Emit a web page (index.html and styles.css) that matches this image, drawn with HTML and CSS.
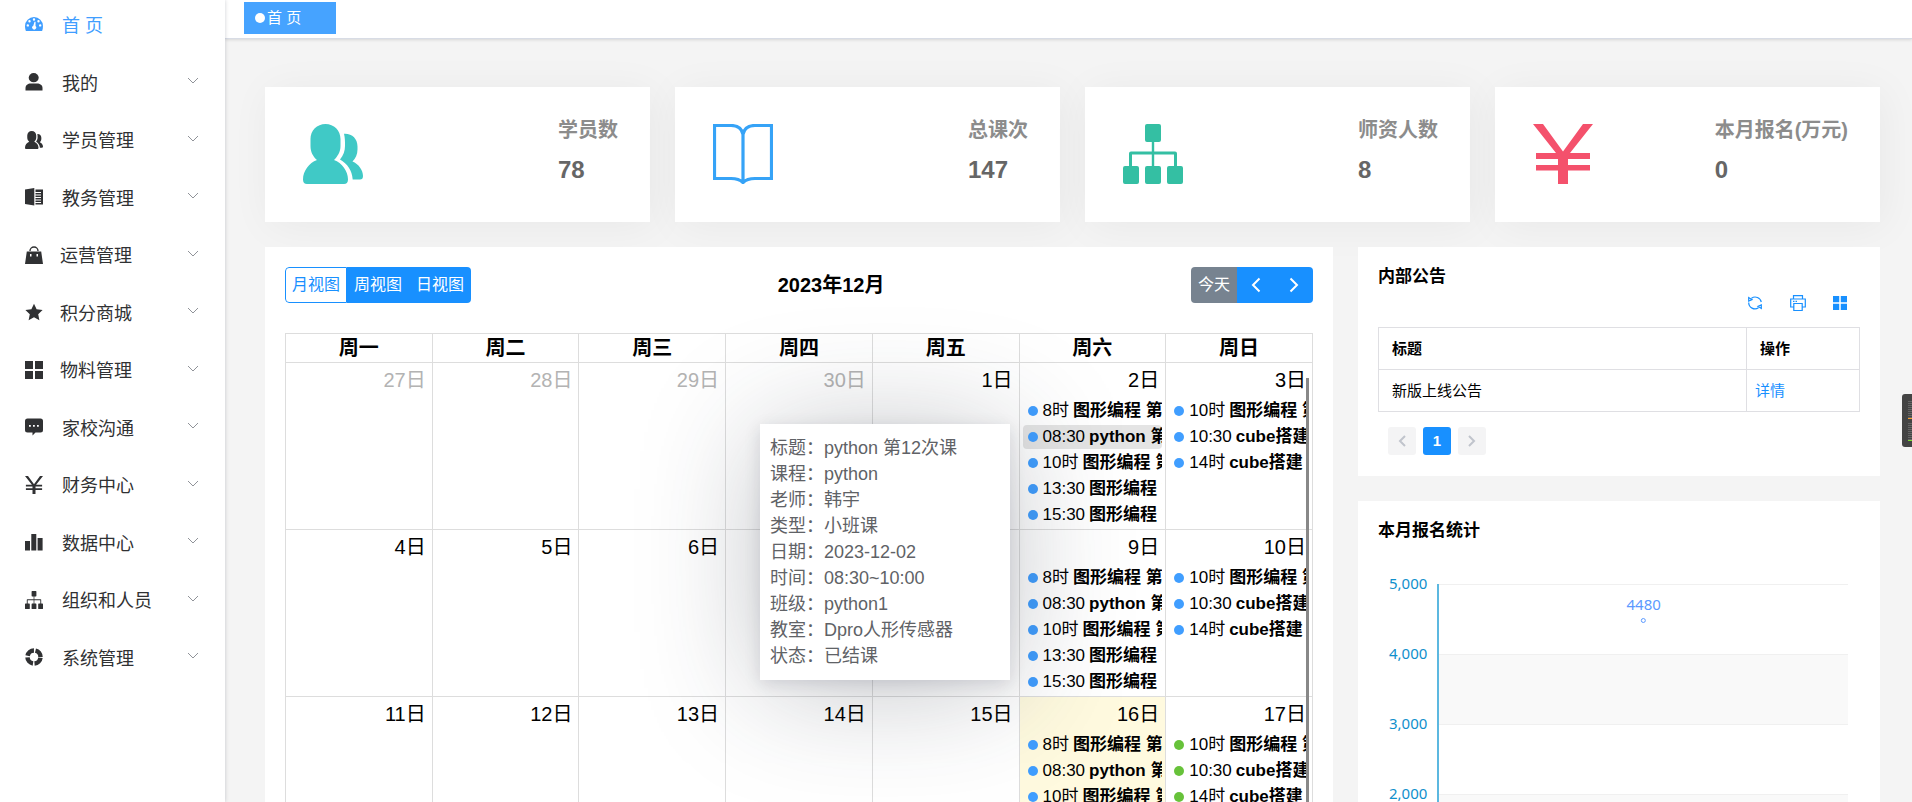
FILE: index.html
```html
<!DOCTYPE html>
<html lang="zh-CN">
<head>
<meta charset="utf-8">
<title>首页</title>
<link rel="stylesheet" href="styles.css">
</head>
<body>
<svg class="defs" aria-hidden="true">
  <symbol id="i-arrow" viewBox="0 0 12 8"><path d="M1 1l5 5 5-5" fill="none" stroke="currentColor" stroke-width="1"/></symbol>
  <symbol id="i-peoples" viewBox="0 0 60 60"><path d="M22.500 0C31 0 37.500 6.500 37.500 15v7c0 6-3 10.500-6.500 14C39 39 45 47 45 55.500c0 3-1.500 4.500-4 4.500H4c-2.500 0-4-1.500-4-4.500C0 47 6 39 14 36c-4-3.500-6.500-8-6.500-14v-7C7.500 6.500 14 0 22.500 0z"/><path d="M41 9.700c8-.5 13.500 4.800 13.500 12.800v3c0 5-2 9-5 12C55.500 40 60 46 60 52c0 2.500-1 3.500-3 3.500h-7.300C49 46 44.500 40 37 35.500c3.500-4.500 5-8.500 5-13.500 0-5 0-8-1-12.300z"/></symbol>
  <symbol id="i-tree" viewBox="0 0 60 60"><path d="M24 0h12a2 2 0 0 1 2 2v14a2 2 0 0 1-2 2h-4.800v9.500H52a2 2 0 0 1 2 2V42h4a2 2 0 0 1 2 2v14a2 2 0 0 1-2 2H46a2 2 0 0 1-2-2V44a2 2 0 0 1 2-2h5V30.500H31.200V42H36a2 2 0 0 1 2 2v14a2 2 0 0 1-2 2H24a2 2 0 0 1-2-2V44a2 2 0 0 1 2-2h4.800V30.500H9V42h5a2 2 0 0 1 2 2v14a2 2 0 0 1-2 2H2a2 2 0 0 1-2-2V44a2 2 0 0 1 2-2h4V29.500a2 2 0 0 1 2-2h20.800V18H24a2 2 0 0 1-2-2V2a2 2 0 0 1 2-2z"/></symbol>
  <symbol id="i-yen" viewBox="0 0 60 60"><path d="M0 0h10l20 27.500L50 0h10L37 29h20v6H35v6h22v5.500H35V60H25V46.500H3V41h22v-6H3v-6h20z"/></symbol>
  <symbol id="i-grid" viewBox="0 0 18 18"><path d="M0 0h8v8H0zM10 0h8v8h-8zM0 10h8v8H0zM10 10h8v8h-8z"/></symbol>
</svg>
<div class="app">
  <nav class="side" aria-label="主菜单">
    <ul class="menu" id="menu"></ul>
  </nav>
  <div class="main">
    <header class="tabs"><a class="tab" href="#home"><i class="tab-dot"></i>首 页</a></header>
    <main class="content">
      <section class="stats">
        <div class="stat"><svg class="stat-icon teal"><use href="#i-peoples"/></svg><div class="stat-text"><h3>学员数</h3><strong>78</strong></div></div>
        <div class="stat"><svg class="stat-icon blue" viewBox="0 0 60 60"><path d="M1.500 1.500H18c7 0 11 3.500 12 9 1-5.500 5-9 12-9h16.500v53H42c-6 0-9 1-12 4-3-3-6-4-12-4H1.500zM30 10v48" fill="none" stroke="currentColor" stroke-width="3.200"/></svg><div class="stat-text"><h3>总课次</h3><strong>147</strong></div></div>
        <div class="stat"><svg class="stat-icon green"><use href="#i-tree"/></svg><div class="stat-text"><h3>师资人数</h3><strong>8</strong></div></div>
        <div class="stat"><svg class="stat-icon red"><use href="#i-yen"/></svg><div class="stat-text"><h3>本月报名(万元)</h3><strong>0</strong></div></div>
      </section>
      <div class="columns">
        <section class="panel calendar">
          <div class="cal-bar">
            <div class="btns"><button class="btn on">月视图</button><button class="btn">周视图</button><button class="btn">日视图</button></div>
            <h2>2023年12月</h2>
            <div class="btns"><button class="btn today">今天</button><button class="btn arrow" aria-label="上月"><svg viewBox="0 0 10 16"><path d="M8.500 1.500L2 8l6.500 6.500"/></svg></button><button class="btn arrow" aria-label="下月"><svg viewBox="0 0 10 16"><path d="M1.500 1.500L8 8l-6.500 6.500"/></svg></button></div>
          </div>
          <div class="cal-body">
            <table class="cal">
              <thead><tr><th>周一</th><th>周二</th><th>周三</th><th>周四</th><th>周五</th><th>周六</th><th>周日</th></tr></thead>
              <tbody id="days"></tbody>
            </table>
            <div class="scroll-thumb"></div>
            <dl class="pop">
              <dt>标题：</dt><dd>python 第12次课</dd>
              <dt>课程：</dt><dd>python</dd>
              <dt>老师：</dt><dd>韩宇</dd>
              <dt>类型：</dt><dd>小班课</dd>
              <dt>日期：</dt><dd>2023-12-02</dd>
              <dt>时间：</dt><dd>08:30~10:00</dd>
              <dt>班级：</dt><dd>python1</dd>
              <dt>教室：</dt><dd>Dpro人形传感器</dd>
              <dt>状态：</dt><dd>已结课</dd>
            </dl>
          </div>
        </section>
        <div class="right">
          <section class="panel notice">
            <h4>内部公告</h4>
            <div class="tools">
              <button class="tool" aria-label="刷新"><svg viewBox="0 0 16 16"><path d="M4.500 3.200A6.300 6.300 0 0 1 14.300 7M1.700 7.500a6.300 6.300 0 0 0 9.800 5.300M1.700 6V2.500L5 4.700zM14.300 10v3.500L11 11.300z" fill="none" stroke="currentColor" stroke-width="1.200"/></svg></button>
              <button class="tool" aria-label="打印"><svg viewBox="0 0 16 16"><path d="M3.500 4V.6h9V4M3.500 12H.7V4h14.600v8h-2.800M3.800 8.500h8.400v7H3.800zM3 6.300h1.500M5.500 6.300H7" fill="none" stroke="currentColor" stroke-width="1.200"/></svg></button>
              <button class="tool" aria-label="列设置"><svg class="small" viewBox="0 0 18 18"><use href="#i-grid"/></svg></button>
            </div>
            <table class="list">
              <thead><tr><th>标题</th><th class="op">操作</th></tr></thead>
              <tbody><tr><td>新版上线公告</td><td class="op"><a href="#detail">详情</a></td></tr></tbody>
            </table>
            <div class="pager"><button aria-label="上一页"><svg viewBox="0 0 8 12"><path d="M7 1L2 6l5 5"/></svg></button><button class="cur">1</button><button aria-label="下一页"><svg viewBox="0 0 8 12"><path d="M1 1l5 5-5 5"/></svg></button></div>
          </section>
          <section class="panel signup">
            <h4>本月报名统计</h4>
            <div class="chart">
              <div class="axis"><span>5,000</span><span>4,000</span><span>3,000</span><span>2,000</span></div>
              <div class="plot"><i></i><i></i><i></i><i></i><div class="point">4480</div></div>
            </div>
          </section>
        </div>
      </div>
    </main>
  </div>
</div>
<aside class="meter" aria-hidden="true"><i class="orange"></i><i class="lime"></i></aside>
<script src="app.js"></script>
</body>
</html>
```
FILE: app.js
```js
const svg = (body) => `<svg class="menu-icon" viewBox="0 0 18 18">${body}</svg>`;
const use = (id) => `<svg class="menu-icon"><use href="#${id}"/></svg>`;
const menu = [
  ['首 页', svg('<path fill-rule="evenodd" d="M9 1a9 9 0 0 1 9 9c0 1.900-.3 3.500-.9 5H.9A12 12 0 0 1 0 10a9 9 0 0 1 9-9zM9 2.300a1.200 1.200 0 1 0 0 2.400 1.200 1.200 0 0 0 0-2.400zM4.500 4a1.200 1.200 0 1 0 0 2.400 1.200 1.200 0 0 0 0-2.400zM13.500 4a1.200 1.200 0 1 0 0 2.400 1.200 1.200 0 0 0 0-2.400zM2.800 8.200a1.200 1.200 0 1 0 0 2.400 1.200 1.200 0 0 0 0-2.400zM15.200 8.200a1.200 1.200 0 1 0 0 2.400 1.200 1.200 0 0 0 0-2.400zM9.500 5.800L8.300 9.700a2 2 0 1 0 2.200.3l.1-4.200z"/>'), 'active'],
  ['我的', svg('<ellipse cx="8.700" cy="4.700" rx="5" ry="4.600"/><path d="M.5 17.500V15c0-3 2.500-4.500 5-4.500h6.500c3 0 5.500 1.500 5.500 4.500v2.500z"/>')],
  ['学员管理', use('i-peoples')],
  ['教务管理', svg('<path d="M0 1.500L9.300 0v17.500L0 16zM10.500 1.500H18v15h-7.500v-1.500H16v-1h-5.500v-1.500H16v-1h-5.500V10H16V9h-5.500V7.500H16v-1h-5.500V5H16V4h-5.500z"/>')],
  ['运营管理', svg('<path d="M5 5a4 4 0 0 1 8 0" fill="none" stroke="currentColor" stroke-width="1.400"/><path fill-rule="evenodd" d="M1.800 5.500h14.400L18 18H0zM5 8v2.500h1.500V8zM11.500 8v2.500H13V8z"/>'), 'near'],
  ['积分商城', svg('<path d="M9 .8l2.600 5.500 6 .7-4.400 4.200 1.200 6L9 14.200l-5.400 3 1.200-6L.4 7l6-.7z"/>'), 'near'],
  ['物料管理', use('i-grid'), 'near'],
  ['家校沟通', svg('<path fill-rule="evenodd" d="M2.500.5h13A2.500 2.500 0 0 1 18 3v9a2.500 2.500 0 0 1-2.500 2.500h-5L7.500 17.500v-3h-5A2.500 2.500 0 0 1 0 12V3A2.500 2.500 0 0 1 2.500.5zM4 7v1.800h1.800V7zM8 7v1.800h1.800V7zM12 7v1.800h1.800V7z"/>')],
  ['财务中心', use('i-yen')],
  ['数据中心', svg('<path d="M0 8h5v9.500H0zM6.300 1h5v16.500h-5zM12.600 5h5v12.500h-5z"/>')],
  ['组织和人员', use('i-tree')],
  ['系统管理', svg('<circle cx="9" cy="9" r="6.500" fill="none" stroke="currentColor" stroke-width="4.500" stroke-dasharray="8.600 1.600" stroke-dashoffset="-.8"/>')],
];
document.getElementById('menu').innerHTML = menu.map(([text, icon, cls]) =>
  `<li><a class="item ${cls || ''}" href="#">${icon}<span>${text}</span>${cls === 'active' ? '' : '<svg class="chev"><use href="#i-arrow"/></svg>'}</a></li>`).join('');

const sat = [['8时', '图形编程 第12次课'], ['08:30', 'python 第12次课'], ['10时', '图形编程 第12次课'], ['13:30', '图形编程 第12次课'], ['15:30', '图形编程 第12次课']];
const sun = [['10时', '图形编程 第12次课'], ['10:30', 'cube搭建 第12次课'], ['14时', 'cube搭建 第12次课']];
const weeks = [[27, 28, 29, 30, 1, 2, 3], [4, 5, 6, 7, 8, 9, 10], [11, 12, 13, 14, 15, 16, 17]];
document.getElementById('days').innerHTML = weeks.map((week, w) => '<tr>' + week.map((day, d) => {
  const events = d === 5 ? sat : d === 6 ? sun : [];
  const cls = [w === 0 && day > 20 ? 'other' : '', day === 16 ? 'now' : '', day === 17 ? 'future' : ''].join(' ');
  return `<td class="${cls}"><div class="num">${day}日</div>` + events.map(([time, name], i) =>
    `<a class="event ${day === 2 && i === 1 ? 'hover' : ''}" href="#"><i></i><span>${time}</span><b>${name}</b></a>`).join('') + '</td>';
}).join('') + '</tr>').join('');
```
FILE: styles.css
```css
* { box-sizing: border-box; }
body {
  margin: 0;
  height: 100vh;
  overflow: hidden;
  background: #f4f4f4;
  color: #000;
  font: 17px/1.2 "Liberation Sans", "Noto Sans CJK SC", sans-serif;
}
a { color: inherit; text-decoration: none; }
button { border: 0; padding: 0; background: none; color: inherit; font: inherit; cursor: pointer; }
h2, h3, h4, ul, dl, dd { margin: 0; padding: 0; }
svg { display: block; fill: currentColor; }
.defs { display: none; }
.app { display: flex; height: 100vh; }

.side {
  flex: 0 0 225px;
  background: #fff;
  box-shadow: 0 0 4px rgba(0, 21, 41, .2);
  z-index: 2;
}
.menu {
  display: flex;
  flex-direction: column;
  height: 86vh;
  margin-top: -4px;
  list-style: none;
}
.menu li { flex: 1; display: flex; }
.item {
  flex: 1;
  display: flex;
  align-items: center;
  padding: 0 26px 0 25px;
  color: #303133;
  font-size: 18px;
}
.item.active { color: #409eff; }
.item span { flex: 1; padding: 5px 0 0 19px; }
.item.near span { padding-left: 17px; }
.menu-icon { width: 18px; height: 18px; }
.chev { width: 12px; height: 8px; margin-bottom: 2px; color: #909399; }

.main { flex: 1; min-width: 0; display: flex; flex-direction: column; }
.tabs {
  flex: 0 0 39px;
  padding: 2px 19px;
  background: #fff;
  border-bottom: 1px solid #d8dce5;
  box-shadow: 0 1px 3px rgba(0, 0, 0, .12);
  z-index: 1;
}
.tab {
  display: flex;
  align-items: center;
  gap: 2px;
  width: 92px;
  height: 32px;
  padding: 0 11px;
  background: #46a3ff;
  color: #fff;
  font-size: 15px;
}
.tab-dot { width: 10px; height: 10px; border-radius: 50%; background: #fff; }

.content { flex: 1; min-height: 0; padding: 48px 32px 0 40px; overflow: hidden; }
.stats { display: grid; grid-template-columns: repeat(4, 1fr); gap: 25px; }
.stat {
  display: flex;
  align-items: center;
  justify-content: space-between;
  height: 135px;
  padding: 0 32px 1px 38px;
  background: #fff;
  box-shadow: 4px 4px 40px rgba(0, 0, 0, .05);
}
.stat-icon { width: 60px; height: 60px; }
.teal { color: #40c9c6; }
.blue { color: #36a3f7; }
.green { color: #34bfa3; }
.red { color: #f4516c; }
.stat-text { padding-bottom: 8px; }
.stat h3 { margin-bottom: 12px; color: #8c8c8c; font-size: 20px; line-height: 28px; }
.stat strong { display: block; color: #666; font-size: 24px; line-height: 28px; }

.columns { display: grid; grid-template-columns: 1068fr 522fr; gap: 25px; margin-top: 25px; }
.panel { position: relative; background: #fff; padding: 20px; }
.calendar { min-width: 0; }
.right { min-width: 0; display: flex; flex-direction: column; gap: 25px; }

.cal-bar { display: flex; justify-content: space-between; align-items: center; height: 36px; margin-bottom: 30px; }
.cal-bar h2 { font-size: 20px; }
.btns { display: flex; height: 36px; border-radius: 4px; overflow: hidden; }
.btn { height: 36px; padding: 0 7px; background: #1890ff; color: #fff; font-size: 16px; }
.btn.on { border: 1px solid #1890ff; border-radius: 4px 0 0 4px; padding: 0 6px; background: #fff; color: #1890ff; }
.btn.today { background: #778390; }
.btn.arrow { display: grid; place-items: center; width: 38px; }
.btn svg { width: 10px; height: 16px; fill: none; stroke: currentColor; stroke-width: 2; }

.cal-body { position: relative; }
.cal { width: 100%; table-layout: fixed; border-collapse: collapse; }
.cal th, .cal td { border: 1px solid #ddd; padding: 0; }
.cal th { height: 29px; font-size: 20px; line-height: 26px; }
.cal td { height: 167px; vertical-align: top; }
.num { padding: 4px 6px 0 0; margin-bottom: 6px; font-size: 20px; line-height: 26px; text-align: right; }
.other .num { color: #b3b3b3; }
.now { background: #fffadf; }
.event {
  display: flex;
  align-items: center;
  gap: 4px;
  height: 24px;
  margin: 0 3px 2px;
  padding-left: 5px;
  border-radius: 4px;
  overflow: hidden;
  white-space: nowrap;
}
.event i { flex: 0 0 10px; height: 10px; margin-right: 1px; border-radius: 50%; background: #409eff; }
.future i { background: #67c23a; }
.event.hover { background: #e4e4e4; }
.scroll-thumb { position: absolute; top: 45px; right: 4px; bottom: 0; width: 3px; background: #888; }

.pop {
  position: absolute;
  top: 91px;
  left: 475px;
  display: grid;
  grid-template-columns: auto 1fr;
  width: 250px;
  padding: 11px 10px;
  background: #fff;
  box-shadow: 0 8px 120px rgba(40, 48, 60, .28), 0 4px 16px rgba(0, 10, 40, .12);
  color: #606266;
  font-size: 18px;
  line-height: 26px;
}

.panel h4 { font-size: 17px; line-height: 20px; }
.notice { padding-bottom: 21px; }
.tools { display: flex; justify-content: flex-end; align-items: center; gap: 27px; height: 16px; margin: 8px 13px 16px 0; color: #1890ff; }
.tool svg { width: 16px; height: 16px; }
.tool .small { width: 14px; height: 14px; }
.list { width: 100%; border-collapse: collapse; font-size: 15px; }
.list th, .list td { height: 42px; border: 1px solid #dfdfe3; padding: 0 13px; text-align: left; }
.list .op { width: 113px; }
.list td.op { padding-left: 8px; color: #1890ff; }
.pager { display: flex; gap: 7px; margin: 15px 10px 0; }
.pager button {
  display: grid;
  place-items: center;
  width: 28px;
  height: 28px;
  border-radius: 3px;
  background: #f4f4f5;
  color: #c0c4cc;
  font-size: 15px;
  font-weight: 700;
}
.pager .cur { background: #1890ff; color: #fff; }
.pager svg { width: 8px; height: 12px; fill: none; stroke: currentColor; stroke-width: 2; }

.chart { display: flex; gap: 10px; margin: 43px 12px 0 11px; font: 15px/20px "Noto Sans", sans-serif; }
.axis { display: flex; flex-direction: column; gap: 50px; margin-top: -11px; color: #1090cc; }
.plot { position: relative; flex: 1; border-left: 2px solid #5cb8e0; }
.plot i { display: block; height: 70px; border-top: 1px solid #f0f0f0; }
.plot i:nth-child(even) { background: #f9f9f9; }
.point { position: absolute; top: 10px; left: 50%; transform: translateX(-50%); color: #5c9aff; text-align: center; }
.point::after { content: ""; display: block; width: 3px; height: 3px; margin: 4px auto 0; border: 1px solid #5c9aff; border-radius: 50%; background: #fff; }

.meter {
  position: fixed;
  top: 394px;
  right: 0;
  z-index: 3;
  display: flex;
  flex-direction: column;
  gap: 4px;
  width: 10px;
  height: 53px;
  padding: 7px 0 0 6px;
  border-radius: 3px 0 0 3px;
  background: #444;
}
.meter i { height: 18px; background: repeating-linear-gradient(#666 0 1px, #444 1px 2px); border-bottom: 1px solid; }
.meter .orange { color: #f5a030; }
.meter .lime { color: #7ee030; }
```
